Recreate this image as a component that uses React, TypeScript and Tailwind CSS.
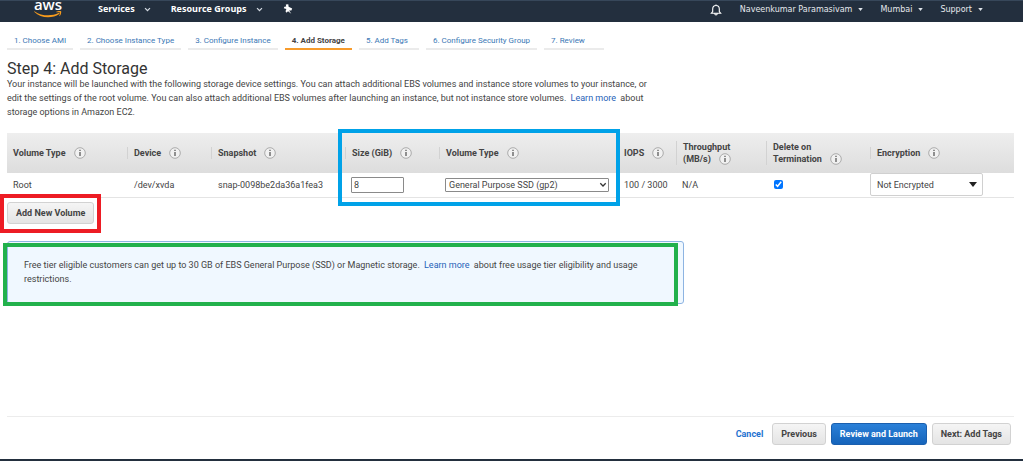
import type { ReactNode } from "react";

function InfoIcon() {
  return (
    <svg viewBox="0 0 12 12" className="ml-2 inline-block h-3 w-3 shrink-0 align-[-3px]" fill="none" aria-hidden="true">
      <circle cx="6" cy="6" r="5.3" fill="#f1f1f1" stroke="#9a9a9a" strokeWidth="0.8" />
      <path d="M5.300 2.700h1.400v1.300H5.300zM5.300 4.900h1.400v4.200H5.300z" fill="#666" />
    </svg>
  );
}

function Chevron() {
  return (
    <svg viewBox="0 0 8 8" className="h-[7px] w-[7px]" fill="none" aria-hidden="true">
      <path d="M1.2 2.4L4 5.4l2.8-3" stroke="#d5dbe3" strokeWidth="1.4" />
    </svg>
  );
}

function Caret() {
  return (
    <svg viewBox="0 0 6 4" className="h-[3px] w-[5px]" aria-hidden="true">
      <path d="M0 0h6L3 4z" fill="#dfe4ea" />
    </svg>
  );
}

function AwsLogo() {
  return (
    <a href="#home" aria-label="AWS home" className="flex w-7 flex-col items-center">
      <span className="-mt-[3px] h-3 font-['Open_Sans',sans-serif] text-[15px] leading-3 font-semibold text-white">aws</span>
      <svg viewBox="0 0 28 8" className="h-2 w-7" fill="none" aria-hidden="true">
        <path d="M0.8 1.4C7 6 17.500 6.600 24.600 3.100c.8-.4 1.300.3.6.9C18.500 8.800 6.500 8.500.4 2c-.3-.4 0-.8.4-.6z" fill="#f79b1c" />
        <path d="M22.300 1.800c1.300-1 4.100-1 4.800-.5.5.6-.2 3.600-1.400 4.800-.3.3-.6.1-.4-.3.4-1 .9-2.600.7-3.100-.3-.5-2.200-.5-3.400-.4-.4 0-.6-.3-.3-.5z" fill="#f79b1c" />
      </svg>
    </a>
  );
}

const steps = [
  "1. Choose AMI",
  "2. Choose Instance Type",
  "3. Configure Instance",
  "4. Add Storage",
  "5. Add Tags",
  "6. Configure Security Group",
  "7. Review",
];

const columns: { label: ReactNode; width: string }[] = [
  { label: "Volume Type", width: "w-[120px]" },
  { label: "Device", width: "w-[84px]" },
  { label: "Snapshot", width: "w-[134px]" },
  { label: "Size (GiB)", width: "w-[94px]" },
  { label: "Volume Type", width: "w-[178px]" },
  { label: "IOPS", width: "w-[59px]" },
  { label: <>Throughput<br />(MB/s)</>, width: "w-[90px]" },
  { label: <>Delete on<br />Termination</>, width: "w-[104px]" },
  { label: "Encryption", width: "" },
];

const greyButton =
  "h-[22px] rounded-[3px] border border-[#d2d2d2] bg-linear-to-b from-[#f5f5f5] to-[#e4e4e4] px-2 text-[9px] font-bold text-[#444]";

function Header() {
  return (
    <header className="mr-px flex h-[22px] items-start overflow-hidden border-t border-[#37475a] bg-[#232f3e] pl-[34px]">
      <AwsLogo />
      <nav className="ml-9 flex h-4 items-center gap-5 font-['Open_Sans',sans-serif] text-[9px] font-bold text-white">
        <button className="flex items-center gap-[9px]">Services <Chevron /></button>
        <button className="flex items-center gap-[9px]">Resource Groups <Chevron /></button>
        <button aria-label="Pin shortcuts">
          <svg viewBox="0 0 10 10" className="h-[10px] w-[10px]" aria-hidden="true">
            <path d="M2.800.6L5.300.3l.3 2.500 3.600 1.800-.8 1.800-2.300.1 2.200 3.200-3.300-2.500-1.400 1.500-1.100-1.400.9-2.200L.8 4.300l.6-1.500 1.800-.2z" fill="#fff" />
          </svg>
        </button>
      </nav>
      <nav className="mr-10 ml-auto flex h-[17px] items-center gap-[17px] font-['DejaVu_Sans',sans-serif] text-[8px] text-[#e6e9ed]">
        <button aria-label="Notifications" className="mr-[1px]">
          <svg viewBox="0 0 12 12" className="h-3 w-3" fill="none" stroke="#fff" strokeWidth="1.1" aria-hidden="true">
            <path d="M6 .5v1M1.300 9.300h9.400L9.300 7.500V5c0-2.200-1.200-3.500-3.300-3.500S2.700 2.800 2.700 5v2.500zM4.800 9.500c0 2 2.400 2 2.400 0" />
          </svg>
        </button>
        <button className="flex items-center gap-[6px]">Naveenkumar Paramasivam <Caret /></button>
        <button className="flex items-center gap-[6px]">Mumbai <Caret /></button>
        <button className="flex items-center gap-[6px]">Support <Caret /></button>
      </nav>
    </header>
  );
}

function VolumeTable() {
  return (
    <div className="relative mt-[14px]">
      <table className="w-full table-fixed border-collapse text-left">
        <thead>
          <tr className="h-10 bg-linear-to-b from-[#eeeeee] to-[#dddddd]">
            {columns.map((column, i) => (
              <th key={i} scope="col" className={`p-0 align-middle leading-3 font-bold text-[#444] ${column.width}`}>
                <div className={i > 0 ? "border-l border-[#d2d2d2] pl-[6px]" : "pl-[6px]"}>
                  {column.label}
                  <InfoIcon />
                </div>
              </th>
            ))}
          </tr>
        </thead>
        <tbody>
          <tr className="h-6 border-b border-[#e4e4e4]">
            <td className="p-0 pl-[6px]">Root</td>
            <td className="p-0 pl-[7px]">/dev/xvda</td>
            <td className="p-0 pl-[7px]">snap-0098be2da36a1fea3</td>
            <td className="p-0 pl-[6px]">
              <input aria-label="Size in GiB" defaultValue="8" className="block h-4 w-[53px] rounded-[1px] border border-[#8a8a8a] bg-white px-[2px]" />
            </td>
            <td className="p-0 pl-[6px]">
              <div className="relative w-[164px]">
                <select aria-label="Volume type" className="block h-[14px] w-full appearance-none rounded-[1px] border border-[#8a8a8a] bg-white pl-[3px] leading-3">
                  <option>General Purpose SSD (gp2)</option>
                </select>
                <svg viewBox="0 0 8 8" className="pointer-events-none absolute top-[3px] right-[2px] h-2 w-2" fill="none" aria-hidden="true">
                  <path d="M1.300 2.300L4 5l2.700-2.700" stroke="#333" strokeWidth="1.300" />
                </svg>
              </div>
            </td>
            <td className="p-0 pl-[7px] whitespace-nowrap">100 / 3000</td>
            <td className="p-0 pl-[6px]">N/A</td>
            <td className="p-0 pl-[8px]">
              <input type="checkbox" defaultChecked aria-label="Delete on termination" className="block h-[9px] w-[9px] accent-[#0075ff]" />
            </td>
            <td className="p-0">
              <div className="relative w-[113px]">
                <select aria-label="Encryption" className="block h-[23px] w-full appearance-none rounded-[2px] border border-[#d0d0d0] bg-white pl-[6px]">
                  <option>Not Encrypted</option>
                </select>
                <svg viewBox="0 0 8 5" className="pointer-events-none absolute top-[9px] right-[6px] h-[5px] w-2" aria-hidden="true">
                  <path d="M0 0h8L4 5z" fill="#222" />
                </svg>
              </div>
            </td>
          </tr>
        </tbody>
      </table>
      <div className="pointer-events-none absolute -top-1 left-[331px] h-[77px] w-[282px] border-4 border-[#00a2e8]" />
    </div>
  );
}

export default function App() {
  return (
    <div className="flex min-h-screen flex-col bg-white font-[Roboto,sans-serif] text-[9px] leading-[14px] text-[#444]">
      <Header />
      <main className="pr-[10px] pl-[7px]">
        <nav aria-label="Wizard steps" className="flex gap-[7px] pt-3">
          {steps.map((step, i) => (
            <a
              key={step}
              href={`#step-${i + 1}`}
              aria-current={i === 3 ? "step" : undefined}
              className={`h-4 min-w-[60px] border-b-2 px-[7px] text-[8px] leading-[13px] ${
                i === 3 ? "border-[#f79b2c] font-bold text-[#444]" : "border-[#ebebeb] text-[#3b78b5]"
              }`}
            >
              {step}
            </a>
          ))}
        </nav>
        <h1 className="mt-[9px] text-[16px] leading-[20px] text-[#333]">Step 4: Add Storage</h1>
        <p className="-mt-[2px] max-w-[655px]">
          Your instance will be launched with the following storage device settings. You can attach additional EBS volumes and
          instance store volumes to your instance, or edit the settings of the root volume. You can also attach additional EBS
          volumes after launching an instance, but not instance store volumes.{" "}
          <a href="#storage" className="mx-[2px] text-[#1f62b8]">Learn more</a> about storage options in Amazon EC2.
        </p>
        <VolumeTable />
        <div className="relative mt-1 w-fit">
          <button className={greyButton}>Add New Volume</button>
          <div className="pointer-events-none absolute -inset-x-[7px] -top-2 -bottom-[9px] border-4 border-[#ed1c24]" />
        </div>
        <div className="relative mt-[17px] h-[63px] max-w-[677px] rounded-[3px] border border-[#8db4e2] bg-[#f0f8ff] px-4 pt-4">
          <p>
            Free tier eligible customers can get up to 30 GB of EBS General Purpose (SSD) or Magnetic storage.{" "}
            <a href="#free-tier" className="mx-[2px] text-[#1f62b8]">Learn more</a> about free usage tier eligibility and usage
            restrictions.
          </p>
          <div className="pointer-events-none absolute top-[1px] right-[5px] -bottom-[3px] -left-[5px] border-4 border-[#22b14c]" />
        </div>
      </main>
      <footer className="mt-auto">
        <div className="mr-[10px] ml-[7px] flex items-center justify-end gap-[5px] border-t border-[#ececec] pt-[6px] pr-[3px] pb-[14px]">
          <a href="#cancel" className="mr-1 font-bold text-[#1f73d0]">Cancel</a>
          <button className={greyButton}>Previous</button>
          <button className="h-[22px] rounded-[3px] border border-[#1a5fae] bg-linear-to-b from-[#2a80d8] to-[#1564bb] px-2 text-[9px] font-bold text-white">
            Review and Launch
          </button>
          <button className={greyButton}>Next: Add Tags</button>
        </div>
        <div className="mr-px h-[2px] bg-[#232f3e]" />
      </footer>
    </div>
  );
}
